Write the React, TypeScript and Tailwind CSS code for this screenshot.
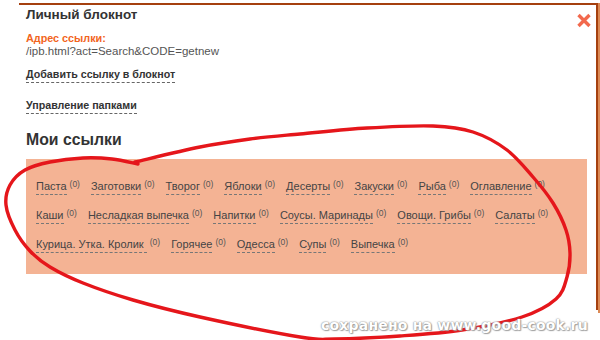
import React from "react";

const rows: string[][] = [
  ["Паста", "Заготовки", "Творог", "Яблоки", "Десерты", "Закуски", "Рыба", "Оглавление"],
  ["Каши", "Несладкая выпечка", "Напитки", "Соусы. Маринады", "Овощи. Грибы", "Салаты"],
  ["Курица. Утка. Кролик\u00a0", "Горячее", "Одесса", "Супы", "Выпечка"],
];

const pts: [number, number][] = [
  [135, 162], [200, 147], [250, 139], [300, 134], [367, 128], [433, 126], [473, 132],
  [507, 150], [533, 177], [553, 203], [566, 230], [570, 253], [567, 277], [556, 299],
  [522, 317], [462, 330], [400, 336], [335, 339], [300, 337], [200, 317], [133, 300],
  [83, 283], [50, 267], [30, 251], [15, 230], [6, 205], [10, 185], [25, 170], [50, 162],
  [83, 158], [112, 159], [138, 164],
];

function toPath(p: [number, number][]) {
  let d = `M${p[0][0]} ${p[0][1]}`;
  for (let i = 0; i < p.length - 1; i++) {
    const p0 = p[i - 1] || p[i];
    const p1 = p[i];
    const p2 = p[i + 1];
    const p3 = p[i + 2] || p2;
    const c1x = p1[0] + (p2[0] - p0[0]) / 6;
    const c1y = p1[1] + (p2[1] - p0[1]) / 6;
    const c2x = p2[0] - (p3[0] - p1[0]) / 6;
    const c2y = p2[1] - (p3[1] - p1[1]) / 6;
    d += ` C${c1x.toFixed(1)} ${c1y.toFixed(1)} ${c2x.toFixed(1)} ${c2y.toFixed(1)} ${p2[0]} ${p2[1]}`;
  }
  return d;
}

export default function App() {
  return (
    <div
      className="relative w-[600px] h-[340px] overflow-hidden bg-white flex"
      style={{ fontFamily: '"Liberation Sans", Arial, sans-serif' }}
    >
      <div className="ml-[19px] mt-[3px] w-[579px] h-[307px] shrink-0 border-t-2 border-r-2 border-[#a5400f] flex flex-col pl-[7px]">
        <div className="flex justify-between">
          <div className="text-[13.5px] leading-[18px] font-bold text-[#333] pt-[1px]">Личный блокнот</div>
          <svg width="16" height="15" viewBox="0 0 16 15" className="mt-[8px] mr-[4px]">
            <path d="M2.5 2 L13.5 13 M13.5 2 L2.5 13" stroke="#f2694d" strokeWidth="3.4" strokeLinecap="butt" />
          </svg>
        </div>
        <div className="mt-[4px] text-[10.8px] leading-[13px] font-bold text-[#f26522]">Адрес ссылки:</div>
        <div className="text-[11.5px] leading-[13px] text-[#555]">/ipb.html?act=Search&amp;CODE=getnew</div>
        <div className="mt-[9px] flex">
          <span className="inline-block text-[10.7px] leading-[15px] font-bold text-[#333] border-b border-dashed border-[#666]">
            Добавить ссылку в блокнот
          </span>
        </div>
        <div className="mt-[15px] flex">
          <span className="inline-block text-[10.7px] leading-[15px] font-bold text-[#333] border-b border-dashed border-[#666]">
            Управление папками
          </span>
        </div>
        <div className="mt-[16px] text-[15.8px] leading-[20px] font-bold text-[#333]">Мои ссылки</div>
        <div className="mt-[9px] w-[561px] h-[115px] bg-[#f4b394] pt-[20px] pl-[10px] flex flex-col">
          {rows.map((row, ri) => (
            <div key={ri} className="h-[29px] flex items-start">
              {row.map((t, ti) => (
                <div key={ti} className="flex items-start mr-[11px] shrink-0 whitespace-nowrap">
                  <span className="inline-block text-[11px] leading-[15px] text-[#444] border-b border-dashed border-[#777]">
                    {t}
                  </span>
                  <span className="ml-[3px] text-[8.5px] leading-[9px] text-[#555] mt-[1px]">(0)</span>
                </div>
              ))}
            </div>
          ))}
        </div>
      </div>
      <div className="mt-[3px] w-[2px] h-[310px] bg-[#dc8a55]" />

      <svg className="absolute left-0 top-0 pointer-events-none" width="600" height="340" viewBox="0 0 600 340">
        <path d={toPath(pts)} fill="none" stroke="#e5161b" strokeWidth="3.4" strokeLinecap="round" strokeLinejoin="round" />
      </svg>

      <div
        className="absolute left-[321px] top-[316px] text-[14px] leading-[18px] font-bold text-white tracking-[0.2px] whitespace-nowrap [text-shadow:0_0_1px_#888,0_0_2px_#999,1px_1px_1px_#aaa]"
        style={{ fontFamily: '"DejaVu Sans", Verdana, sans-serif' }}
      >
        сохранено на www.good-cook.ru
      </div>
    </div>
  );
}
